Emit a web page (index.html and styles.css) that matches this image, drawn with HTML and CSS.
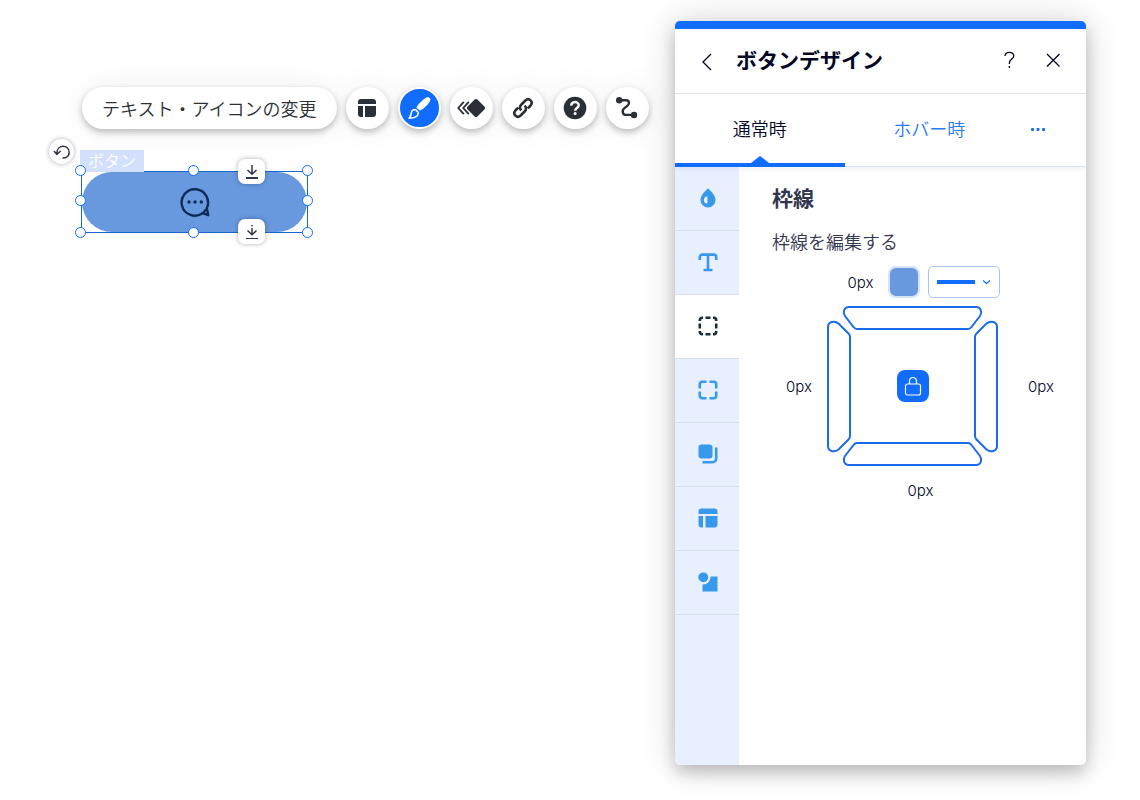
FILE: index.html
```html
<!DOCTYPE html>
<html lang="ja">
<head>
<meta charset="utf-8">
<meta name="viewport" content="width=device-width, initial-scale=1">
<title>ボタンデザイン</title>
<link rel="stylesheet" href="styles.css">
</head>
<body>
<div class="editor">
  <main class="canvas">
    <div class="toolbar" role="toolbar" aria-label="ボタン">
      <button class="tool-text" type="button">テキスト・アイコンの変更</button>
      <button class="tool" type="button" aria-label="レイアウト">
        <svg width="18" height="18" viewBox="0 0 18 18"><path fill="currentColor" d="M3 0h12a3 3 0 0 1 3 3v2H0V3a3 3 0 0 1 3-3zM0 7h5v11H3a3 3 0 0 1-3-3zM7 7h11v8a3 3 0 0 1-3 3H7z"/></svg>
      </button>
      <button class="tool tool-active" type="button" aria-label="デザイン">
        <svg width="24" height="24" viewBox="0 0 24 24"><path fill="currentColor" d="M9.500 12C9.800 9.500 16 3.600 19.300 1.600c2.600-1.500 5.100.8 3.700 3.500C21.300 8.600 15.600 14 12.800 14.600z"/><path fill="none" stroke="currentColor" stroke-width="1.500" stroke-linejoin="round" d="M8.400 13.600l2.800 2.700c.4 3.500-2.900 6-9.200 6l1.700-1.500-.9-.6c1.500-.9 1.300-2 1.500-3.300.3-2.100 1.900-3.300 4.100-3.300z"/></svg>
      </button>
      <button class="tool" type="button" aria-label="アニメーション">
        <svg width="28" height="20" viewBox="0 0 28 20"><path fill="currentColor" d="M17.600 1.600a2 2 0 0 1 2.800 0l7 7a2 2 0 0 1 0 2.800l-7 7a2 2 0 0 1-2.800 0l-7-7a2 2 0 0 1 0-2.800z"/><path fill="none" stroke="currentColor" stroke-width="1.800" d="M6.800 3.800L1.300 10l5.500 6.200M11.800 3.800L6.300 10l5.500 6.200"/></svg>
      </button>
      <button class="tool" type="button" aria-label="リンク">
        <svg width="22" height="22" viewBox="0 0 22 22" fill="none" stroke="currentColor" stroke-width="2.600"><path d="M9.400 13.400c-2-1.800-1.900-4 0-5.900l4-4c3.700-3.300 8.300 1.300 5.200 5l-2.800 2.800M12.600 8.600c2 1.800 1.900 4 0 5.900l-4 4c-3.700 3.300-8.300-1.300-5.200-5l2.800-2.800"/></svg>
      </button>
      <button class="tool" type="button" aria-label="ヘルプ">
        <svg width="24" height="24" viewBox="0 0 24 24"><circle cx="12" cy="12" r="11.300" fill="currentColor"/><path fill="none" stroke="#fff" stroke-width="2.400" d="M8.200 9.600C8.300 4.900 15.800 5 15.700 9.300c0 2.700-3.600 2.700-3.600 5.500"/><circle cx="12.100" cy="17.600" r="1.500" fill="#fff"/></svg>
      </button>
      <button class="tool" type="button" aria-label="パス">
        <svg width="24" height="24" viewBox="0 0 24 24"><path fill="none" stroke="currentColor" stroke-width="2.400" d="M4 4.200h7.300c3.200 0 3.400 3.700 1.500 5.200l-3.600 3c-2.800 2.400-1.400 6.500 2 6.500h6.500"/><circle cx="4.200" cy="4.200" r="3.200" fill="currentColor"/><circle cx="19" cy="19" r="3.200" fill="currentColor"/></svg>
      </button>
    </div>

    <div class="selection">
      <button class="stage-button" type="button" aria-label="チャット">
        <svg width="30" height="30" viewBox="0 0 30 30"><path fill="none" stroke="currentColor" stroke-width="2.400" stroke-linejoin="round" d="M22.500 26.200A13.200 13.200 0 1 1 26.800 21l1.400 7.200zM25.900 22.300c-.9 1.700-2 2.900-3.400 3.900"/><circle cx="9" cy="15" r="1.700" fill="currentColor"/><circle cx="15" cy="15" r="1.700" fill="currentColor"/><circle cx="21.300" cy="15" r="1.700" fill="currentColor"/></svg>
      </button>
      <span class="selection-label">ボタン</span>
      <button class="undo" type="button" aria-label="元に戻す">
        <svg width="18" height="16" viewBox="0 0 18 16" fill="none" stroke="currentColor" stroke-width="1.500"><path d="M9.500 13.800c2 .8 6.700-.8 6.700-5.500 0-8-12.200-8.500-12.300.8M.900 7l3 3.500L7.600 7"/></svg>
      </button>
      <span class="handle top left"></span><span class="handle top center"></span><span class="handle top right"></span>
      <span class="handle middle left"></span><span class="handle middle right"></span>
      <span class="handle bottom left"></span><span class="handle bottom center"></span><span class="handle bottom right"></span>
      <button class="dock dock-top" type="button" aria-label="上の間隔">
        <svg width="14" height="16" viewBox="0 0 14 16" fill="none" stroke="currentColor"><path stroke-width="1.500" d="M7 1v9M2.500 6L7 10.300 11.500 6"/><path stroke-width="2" d="M1 14h12"/></svg>
      </button>
      <button class="dock dock-bottom" type="button" aria-label="下の間隔">
        <svg width="14" height="16" viewBox="0 0 14 16" fill="none" stroke="currentColor"><path stroke-width="1.500" d="M7 1v1.500M7 4v6.500M2.500 6.500L7 10.800l4.500-4.300"/><path stroke-width="1" d="M1 14.500h12"/></svg>
      </button>
    </div>
  </main>

  <aside class="panel">
    <header class="panel-header">
      <button class="icon-button" type="button" aria-label="戻る">
        <svg width="24" height="24" viewBox="0 0 24 24" fill="none" stroke="currentColor" stroke-width="1.300"><path d="M16 5l-8 8 8 8"/></svg>
      </button>
      <h1 class="panel-title">ボタンデザイン</h1>
      <button class="icon-button" type="button" aria-label="ヘルプ">
        <svg width="24" height="24" viewBox="0 0 24 24" fill="none" stroke="currentColor" stroke-width="1.300"><path d="M8 7c.2-5 9-4.900 8.800 0-.1 3.100-4.400 3.200-4.400 7v1M12.400 17v2"/></svg>
      </button>
      <button class="icon-button" type="button" aria-label="閉じる">
        <svg width="24" height="24" viewBox="0 0 24 24" fill="none" stroke="currentColor" stroke-width="1.300"><path d="M6 5l12.500 12.500M18.500 5L6 17.500"/></svg>
      </button>
    </header>

    <nav class="tabs" aria-label="状態">
      <button class="tab tab-active" type="button">通常時</button>
      <button class="tab" type="button">ホバー時</button>
      <button class="tab-more" type="button" aria-label="その他">
        <svg width="14" height="4" viewBox="0 0 14 4" fill="currentColor"><rect width="3" height="3" rx="1"/><rect width="3" height="3" x="5.500" rx="1"/><rect width="3" height="3" x="11" rx="1"/></svg>
      </button>
    </nav>

    <div class="panel-body">
      <nav class="side" aria-label="デザイン項目">
        <button class="side-item" type="button" aria-label="塗りつぶし">
          <svg width="20" height="20" viewBox="0 0 20 20"><path fill="currentColor" d="M10 .3c3 3.200 7.500 7 7.500 11.700a7.500 7.500 0 0 1-15 0C2.500 7.300 7 3.500 10 .3z"/><path fill="#e8effe" d="M9.400 8.600v7a3.500 3.500 0 0 1 0-7z"/></svg>
        </button>
        <button class="side-item" type="button" aria-label="テキスト">
          <svg width="20" height="20" viewBox="0 0 20 20" fill="none" stroke="currentColor" stroke-width="2.600"><path d="M1.800 8V5a2.400 2.400 0 0 1 2.400-2.400h11.600A2.400 2.400 0 0 1 18.200 5v3M10 2.600v15.600M5.500 18h9"/></svg>
        </button>
        <button class="side-item side-active" type="button" aria-label="枠線" aria-current="true">
          <svg width="20" height="20" viewBox="0 0 20 20" fill="none" stroke="currentColor" stroke-width="2.600"><path d="M1.800 5V4.200a2.400 2.400 0 0 1 2.400-2.400H5M15 1.800h.8a2.400 2.400 0 0 1 2.400 2.400V5M18.200 15v.8a2.400 2.400 0 0 1-2.400 2.400H15M5 18.200h-.8a2.400 2.400 0 0 1-2.400-2.400V15M7.500 1.800h5M7.500 18.200h5M1.800 7.500v5M18.200 7.500v5"/></svg>
        </button>
        <button class="side-item" type="button" aria-label="角">
          <svg width="20" height="20" viewBox="0 0 20 20" fill="none" stroke="currentColor" stroke-width="2.600"><path d="M1.800 8.500V4.200a2.400 2.400 0 0 1 2.400-2.400h4.300M11.500 1.800h4.300a2.400 2.400 0 0 1 2.400 2.400v4.300M18.200 11.500v4.300a2.400 2.400 0 0 1-2.400 2.400h-4.300M8.500 18.200H4.200a2.400 2.400 0 0 1-2.400-2.400v-4.300"/></svg>
        </button>
        <button class="side-item" type="button" aria-label="影">
          <svg width="20" height="20" viewBox="0 0 20 20"><rect x=".5" y=".5" width="14" height="14" rx="3" fill="currentColor"/><path fill="none" stroke="currentColor" stroke-width="2.600" d="M18.200 3.500v11.200a3.500 3.500 0 0 1-3.500 3.500H4.500"/></svg>
        </button>
        <button class="side-item" type="button" aria-label="レイアウト">
          <svg width="20" height="20" viewBox="0 0 20 20"><path fill="currentColor" d="M3.500.5h13a3 3 0 0 1 3 3V6H.5V3.500a3 3 0 0 1 3-3zM.5 8H5v11.500H3.500a3 3 0 0 1-3-3zM7.500 8h12v8.500a3 3 0 0 1-3 3h-9z"/></svg>
        </button>
        <button class="side-item" type="button" aria-label="アイコン">
          <svg width="20" height="20" viewBox="0 0 20 20" fill="currentColor"><circle cx="5.300" cy="5.300" r="4.900"/><path d="M12.500 4.500h7v15h-15v-7c4.600.2 8-3.200 8-8z"/></svg>
        </button>
      </nav>

      <section class="content">
        <h2 class="content-title">枠線</h2>
        <p class="content-text">枠線を編集する</p>
        <div class="line-row">
          <span class="size">0px</span>
          <button class="swatch" type="button" aria-label="枠線の色"></button>
          <div class="line-style">
            <select class="line-select" aria-label="線のスタイル"><option value="solid" label=" "></option></select>
            <svg class="line-icon" width="56" height="8" viewBox="0 0 56 8" fill="none" stroke="#116dff"><path stroke-width="4" d="M0 4h38"/><path stroke-width="1.200" d="M46 2.500l3.500 3 3.500-3"/></svg>
          </div>
        </div>
        <div class="sides">
          <span class="size size-left">0px</span>
          <div class="frame">
            <svg width="171" height="160" viewBox="0 0 171 160" fill="none" stroke="#1a6aeb" stroke-width="2">
              <path d="M22 1h127c5 0 6.500 5 4 9l-8.500 11q-1.500 2-3.500 2H30q-2 0-3.500-2L18 10C15.500 6 17 1 22 1z"/>
              <path d="M22 159h127c5 0 6.500-5 4-9l-8.500-11q-1.500-2-3.500-2H30q-2 0-3.500 2L18 150c-2.500 4-1 9 4 9z"/>
              <path d="M1 21v119c0 5 6 7 10.500 3.500l10-10q1.500-1.500 1.500-3.500V31q0-2-1.500-3.500l-10-10C7 14 1 16 1 21z"/>
              <path d="M170 21v119c0 5-6 7-10.500 3.500l-10-10q-1.500-1.500-1.500-3.500V31q0-2 1.500-3.500l10-10C164 14 170 16 170 21z"/>
            </svg>
            <button class="lock" type="button" aria-label="すべての辺を固定">
              <svg width="18" height="20" viewBox="0 0 18 20" fill="none" stroke="#fff" stroke-width="1.200"><rect x="1.500" y="8" width="15" height="11" rx="2"/><path d="M5.500 8V5a3.500 3.500 0 0 1 7 0v3"/></svg>
            </button>
          </div>
          <span class="size size-right">0px</span>
        </div>
        <div class="bottom-row"><span class="size">0px</span></div>
      </section>
    </div>
  </aside>
</div>
</body>
</html>
```
FILE: styles.css
```css
* { box-sizing: border-box; }

body {
  margin: 0;
  background: #fff;
  color: #000624;
  font-family: Inter, "Noto Sans CJK JP", sans-serif;
  font-weight: 350;
}

button {
  margin: 0;
  padding: 0;
  border: 0;
  background: none;
  color: inherit;
  font: inherit;
  cursor: pointer;
}

svg { display: block; flex: none; }

.editor {
  display: flex;
  min-height: 100vh;
  padding: 21px 54px 35px 0;
}

/* Canvas */
.canvas {
  flex: 1;
  padding: 66px 24px 0 81px;
}

.toolbar {
  display: flex;
  gap: 9px;
  padding-left: 1px;
  color: #2b2f36;
}

.tool-text,
.tool {
  height: 42px;
  border-radius: 21px;
  background: #fff;
  box-shadow: 0 3px 7px rgba(0, 0, 0, .26), 0 0 36px rgba(0, 0, 0, .06);
}

.tool-text {
  flex: none;
  padding: 0 20px;
  font-size: 18px;
  white-space: nowrap;
}

.tool {
  display: flex;
  flex: none;
  align-items: center;
  justify-content: center;
  width: 43px;
}

.tool-active {
  border: 2px solid #fff;
  background: #116dff;
  color: #fff;
}

.selection {
  position: relative;
  width: 227px;
  margin-top: 42px;
  border: 1px solid #1a66d0;
}

.stage-button {
  display: flex;
  align-items: center;
  justify-content: center;
  width: 100%;
  height: 60px;
  border-radius: 30px;
  background: #6899df;
  color: #0b2b59;
}

.selection-label {
  position: absolute;
  bottom: 100%;
  left: -2px;
  padding: 0 8px;
  background: #d2e0fd;
  color: #fff;
  font-size: 16px;
  line-height: 22px;
}

.undo,
.dock {
  position: absolute;
  display: flex;
  align-items: center;
  justify-content: center;
  background: #fff;
  color: #32364a;
  box-shadow: 0 0 5px rgba(0, 6, 36, .32);
}

.undo {
  top: -33px;
  left: -33px;
  width: 25px;
  height: 25px;
  border-radius: 50%;
}

.handle {
  position: absolute;
  width: 11px;
  height: 11px;
  margin: -6px 0 0 -6px;
  border: 1px solid #116dff;
  border-radius: 50%;
  background: #fff;
}

.top { top: -1px; }
.middle { top: 50%; margin-top: -7px; }
.bottom { top: 100%; margin-top: -5px; }
.left { left: -1px; }
.center { left: 50%; margin-left: -7px; }
.right { left: 100%; margin-left: -5px; }

.dock {
  left: 156px;
  width: 27px;
  height: 25px;
  border-radius: 7px;
}

.dock-top { top: -13px; }
.dock-bottom { bottom: -12px; }

/* Panel */
.panel {
  display: flex;
  flex: none;
  flex-direction: column;
  width: 36%;
  min-width: 411px;
  overflow: hidden;
  border-top: 8px solid #116dff;
  border-radius: 5px;
  background: #fff;
  box-shadow: 0 8px 16px rgba(0, 0, 0, .2), 0 0 36px rgba(0, 0, 0, .16);
}

.panel-header {
  display: flex;
  align-items: center;
  gap: 20px;
  height: 65px;
  padding: 0 21px 0 20px;
  border-bottom: 1px solid #dfe5eb;
}

.icon-button { width: 24px; height: 24px; }

.panel-title {
  flex: 1;
  margin: 0 0 0 -3px;
  font-size: 21px;
  font-weight: 700;
  line-height: 32px;
}

.tabs {
  position: relative;
  z-index: 1;
  display: flex;
  height: 73px;
  padding-right: 24px;
  border-bottom: 1px solid #d5e4f7;
  box-shadow: 0 2px 5px rgba(0, 6, 36, .06);
}

.tab {
  position: relative;
  flex: 1;
  padding-bottom: 4px;
  color: #2b7af5;
  font-size: 18px;
}

.tab-active { color: #000624; }

.tab-active::after {
  position: absolute;
  right: 0;
  bottom: -1px;
  left: 0;
  height: 4px;
  background: #116dff;
  content: "";
}

.tab-active::before {
  position: absolute;
  bottom: 3px;
  left: 50%;
  margin-left: -9px;
  border: 9px solid transparent;
  border-top: 0;
  border-bottom: 7px solid #116dff;
  content: "";
}

.tab-more {
  display: flex;
  align-items: center;
  justify-content: center;
  width: 48px;
  color: #116dff;
}

.panel-body {
  display: flex;
  flex: 1;
}

.side {
  display: flex;
  flex: none;
  flex-direction: column;
  width: 64px;
  background: #e8effe;
}

.side-item {
  display: flex;
  align-items: center;
  justify-content: center;
  width: 100%;
  height: 64px;
  padding: 0 0 1px 1px;
  border-bottom: 1px solid #d6dff2;
  color: #3899ec;
}

.side-active {
  background: #fff;
  color: #162d3d;
}

.content {
  flex: 1;
  padding-top: 16px;
}

.content-title,
.content-text {
  margin: 0;
  padding-left: 33px;
  color: #32364f;
}

.content-title {
  font-size: 21px;
  font-weight: 700;
  line-height: 32px;
}

.content-text {
  margin-top: 12px;
  font-size: 18px;
  line-height: 32px;
}

.size {
  padding-top: 1px;
  font-size: 15px;
  line-height: 20px;
}

.line-row {
  display: flex;
  align-items: center;
  justify-content: center;
  margin-top: 7px;
  padding-left: 23px;
}

.swatch {
  width: 32px;
  height: 32px;
  margin: 0 8px 0 15px;
  border: 2px solid #d5e3f7;
  border-radius: 8px;
  background: #6899df;
}

.line-style { position: relative; }

.line-select {
  display: block;
  width: 72px;
  height: 32px;
  border: 1px solid #a8c6f5;
  border-radius: 5px;
  background: #fff;
  appearance: none;
}

.line-icon {
  position: absolute;
  top: 12px;
  left: 9px;
  pointer-events: none;
}

.sides {
  display: grid;
  grid-template-columns: 1fr auto 1fr;
  align-items: center;
  margin-top: 8px;
}

.size-left { justify-self: end; margin-right: 15px; }
.size-right { margin-left: 30px; }

.frame {
  display: grid;
  place-items: center;
}

.frame > * { grid-area: 1 / 1; }

.lock {
  display: flex;
  align-items: center;
  justify-content: center;
  width: 32px;
  height: 32px;
  border-radius: 8px;
  background: #116dff;
}

.bottom-row {
  display: flex;
  justify-content: center;
  margin-top: 14px;
  padding-left: 16px;
}
```
